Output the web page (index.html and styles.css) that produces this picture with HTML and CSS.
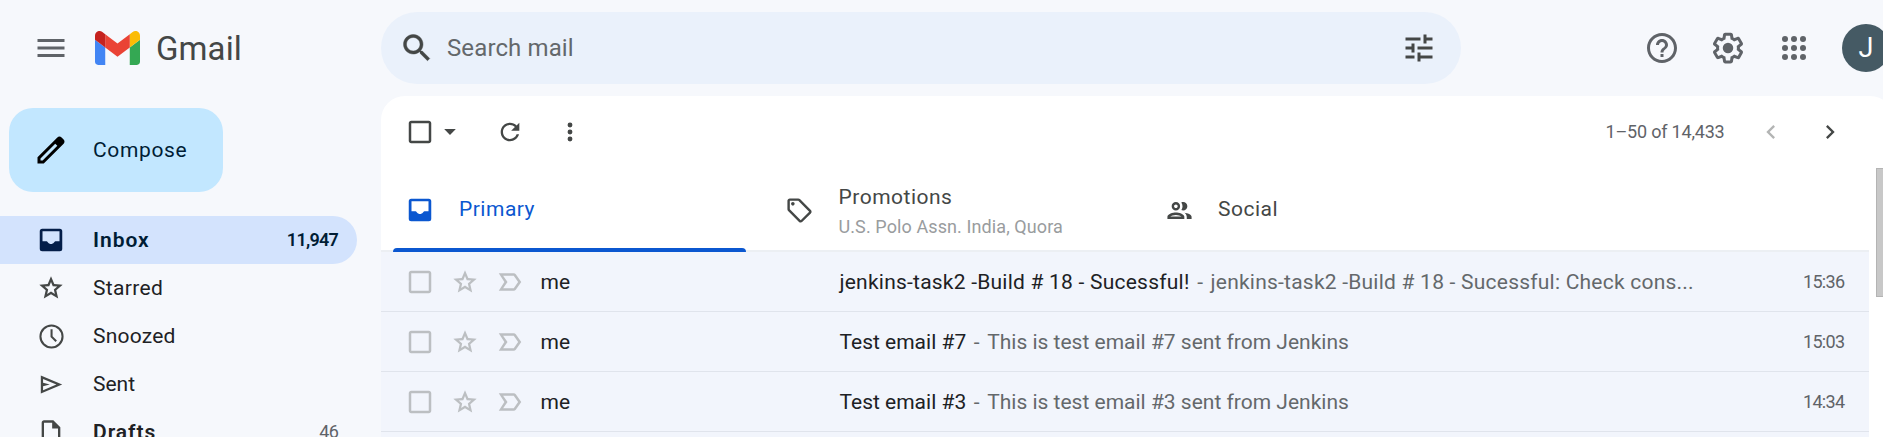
FILE: index.html
```
<!DOCTYPE html>
<html lang="en">
<head>
<meta charset="utf-8">
<title>Gmail</title>
<link rel="stylesheet" href="styles.css">
</head>
<body>
<svg class="defs" width="0" height="0">
  <symbol id="box" viewBox="0 0 24 24"><path d="M19 5v14H5V5h14m0-2H5c-1.100 0-2 .9-2 2v14c0 1.100.9 2 2 2h14c1.100 0 2-.9 2-2V5c0-1.100-.9-2-2-2z"/></symbol>
  <symbol id="star" viewBox="0 0 24 24"><path d="M22 9.240l-7.190-.620L12 2 9.190 8.630 2 9.240l5.460 4.730L5.820 21 12 17.270 18.180 21l-1.630-7.030L22 9.240zM12 15.100l-3.300 2 .88-3.760-2.920-2.530 3.850-.330L12 6.900l1.500 3.580 3.850.330-2.920 2.530.88 3.760L12 15.100z"/></symbol>
  <symbol id="important" viewBox="0 0 24 24"><path d="M15 19H3l4.500-7L3 5h12c.65 0 1.260.31 1.630.84L21 12l-4.370 6.160c-.37.52-.98.84-1.630.84zm-8.500-2H15l3.500-5L15 7H6.500l3.500 5-3.500 5z"/></symbol>
  <symbol id="inbox" viewBox="0 0 24 24"><path fill-rule="evenodd" d="M5 3h14a2 2 0 0 1 2 2v14a2 2 0 0 1-2 2H5a2 2 0 0 1-2-2V5a2 2 0 0 1 2-2zM5.200 5v8h3.300c.9.100 1.300 2.200 3.500 2.200s2.600-2.100 3.500-2.200h3.300V5z"/></symbol>
</svg>

<header class="topbar">
  <div class="brand">
    <svg class="icon i36 grey" viewBox="0 0 24 24"><path d="M3 18h18v-2H3v2zm0-5h18v-2H3v2zm0-7v2h18V6H3z"/></svg>
    <svg class="logo" viewBox="52 42 88 66">
      <path fill="#4285f4" d="M58 108h14V74L52 59v43c0 3.320 2.690 6 6 6"/>
      <path fill="#34a853" d="M120 108h14c3.320 0 6-2.690 6-6V59l-20 15"/>
      <path fill="#fbbc04" d="M120 48v26l20-15v-8c0-7.420-8.470-11.650-14.400-7.200"/>
      <path fill="#ea4335" d="M72 74V48l24 18 24-18v26L96 92"/>
      <path fill="#c5221f" d="M52 51v8l20 15V48l-5.600-4.200c-5.940-4.450-14.400-.22-14.400 7.200"/>
    </svg>
    <span class="brand-name">Gmail</span>
  </div>
  <div class="search">
    <svg class="icon i36 lens" viewBox="0 0 24 24"><path d="M15.500 14h-.79l-.28-.27C15.410 12.590 16 11.110 16 9.500 16 5.910 13.090 3 9.500 3S3 5.910 3 9.500 5.910 16 9.500 16c1.610 0 3.090-.59 4.230-1.570l.27.28v.79l5 4.990L20.490 19l-4.990-5zm-6 0C7.010 14 5 11.990 5 9.500S7.010 5 9.500 5 14 7.010 14 9.500 11.990 14 9.500 14z"/></svg>
    <span class="search-text">Search mail</span>
    <svg class="icon i36" viewBox="0 0 24 24"><path d="M3 17v2h6v-2H3zM3 5v2h10V5H3zm10 16v-2h8v-2h-8v-2h-2v6h2zM7 9v2H3v2h4v2h2V9H7zm14 4v-2H11v2h10zm-6-4h2V7h4V5h-4V3h-2v6z"/></svg>
  </div>
  <div class="tools">
    <svg class="icon i36 grey" viewBox="0 0 24 24"><path d="M11 18h2v-2h-2v2zm1-16C6.480 2 2 6.480 2 12s4.480 10 10 10 10-4.480 10-10S17.520 2 12 2zm0 18c-4.410 0-8-3.590-8-8s3.590-8 8-8 8 3.590 8 8-3.590 8-8 8zm0-14c-2.210 0-4 1.790-4 4h2c0-1.100.9-2 2-2s2 .9 2 2c0 2-3 1.750-3 5h2c0-2.250 3-2.500 3-5 0-2.210-1.790-4-4-4z"/></svg>
    <svg class="icon i36 grey" viewBox="0 0 24 24"><path d="M13.850 22.250h-3.700c-.74 0-1.360-.54-1.450-1.270l-.27-1.890c-.27-.14-.53-.29-.79-.46l-1.800.72c-.7.26-1.470-.03-1.810-.65L2.200 15.530c-.35-.66-.2-1.440.36-1.880l1.530-1.190c-.01-.15-.02-.3-.02-.46 0-.15.01-.31.02-.46l-1.520-1.190c-.59-.45-.74-1.260-.37-1.880l1.850-3.190c.34-.62 1.110-.9 1.790-.63l1.810.73c.26-.17.52-.32.78-.46l.27-1.910c.09-.7.71-1.250 1.440-1.250h3.700c.74 0 1.360.54 1.450 1.270l.27 1.890c.27.14.53.29.79.46l1.800-.72c.71-.26 1.480.03 1.820.65l1.840 3.180c.36.66.2 1.440-.36 1.880l-1.520 1.190c.01.15.02.3.02.46s-.01.31-.02.46l1.520 1.190c.56.45.72 1.230.37 1.860l-1.860 3.220c-.34.62-1.110.9-1.800.63l-1.800-.72c-.26.17-.52.32-.78.46l-.27 1.910c-.1.68-.72 1.220-1.460 1.220zm-3.230-2h2.760l.37-2.550.53-.22c.44-.18.88-.44 1.340-.78l.45-.34 2.380.96 1.380-2.400-2.030-1.580.07-.56c.03-.26.06-.51.06-.78s-.03-.53-.06-.78l-.07-.56 2.030-1.580-1.390-2.400-2.390.96-.45-.35c-.42-.32-.87-.58-1.330-.77l-.52-.22-.37-2.550h-2.760l-.37 2.550-.53.21c-.44.19-.88.44-1.340.79l-.45.33-2.380-.95-1.390 2.390 2.030 1.580-.07.56a7 7 0 0 0-.06.79c0 .26.02.53.06.78l.07.56-2.030 1.580 1.380 2.400 2.390-.96.45.35c.43.33.86.58 1.330.77l.53.22.38 2.550z"/><circle cx="12" cy="12" r="3.500"/></svg>
    <svg class="icon i36 grey" viewBox="0 0 24 24"><circle cx="6" cy="6" r="2"/><circle cx="12" cy="6" r="2"/><circle cx="18" cy="6" r="2"/><circle cx="6" cy="12" r="2"/><circle cx="12" cy="12" r="2"/><circle cx="18" cy="12" r="2"/><circle cx="6" cy="18" r="2"/><circle cx="12" cy="18" r="2"/><circle cx="18" cy="18" r="2"/></svg>
    <span class="avatar">J</span>
  </div>
</header>

<div class="content">
  <nav class="sidebar">
    <div class="compose">
      <svg class="icon i36" viewBox="0 0 24 24"><path d="M20.410 4.940l-1.350-1.350c-.78-.78-2.050-.78-2.830 0L3 16.820V21h4.180L20.410 7.770c.79-.78.79-2.050 0-2.830zM6.410 19.060L5 19v-1.360l9.820-9.820 1.410 1.410-9.820 9.830z"/></svg>
      <span>Compose</span>
    </div>
    <div class="folder active">
      <span class="slot"><svg class="icon i30"><use href="#inbox"/></svg></span>
      <span class="name bold">Inbox</span><span class="count">11,947</span>
    </div>
    <div class="folder">
      <span class="slot"><svg class="icon i28"><use href="#star"/></svg></span>
      <span class="name starred">Starred</span>
    </div>
    <div class="folder">
      <span class="slot"><svg class="icon i29" viewBox="0 0 24 24"><path d="M12 2a10 10 0 1 0 0 20 10 10 0 0 0 0-20zm0 18.300a8.300 8.300 0 1 1 0-16.600 8.300 8.300 0 0 1 0 16.600zM11.200 6h1.700v5.800l3.600 3.500-1.200 1.200-4.100-4z"/></svg></span>
      <span class="name snoozed">Snoozed</span>
    </div>
    <div class="folder">
      <span class="slot"><svg class="icon i27" viewBox="0 0 24 24"><path d="M2.500 4v16l19-8-19-8zm2 3l11.850 5-11.850 5v-3.500l6-1.500-6-1.500V7z"/></svg></span>
      <span class="name">Sent</span>
    </div>
    <div class="folder">
      <span class="slot"><svg class="icon i28" viewBox="0 0 24 24"><path d="M14 2H6c-1.100 0-2 .9-2 2v16c0 1.100.9 2 2 2h12c1.100 0 2-.9 2-2V8l-6-6zM6 20V4h7v5h5v11H6z"/></svg></span>
      <span class="name bold">Drafts</span><span class="count light">46</span>
    </div>
  </nav>

  <main class="panel">
    <div class="toolbar">
      <svg class="icon i30"><use href="#box"/></svg>
      <svg class="icon i28 caret" viewBox="0 0 24 24"><path d="M7 9.500l5 5 5-5z"/></svg>
      <svg class="icon i28 refresh" viewBox="0 0 24 24"><path d="M17.650 6.350C16.200 4.900 14.210 4 12 4c-4.420 0-7.990 3.580-7.990 8s3.570 8 7.990 8c3.730 0 6.840-2.550 7.730-6h-2.080c-.82 2.330-3.040 4-5.650 4-3.310 0-6-2.690-6-6s2.690-6 6-6c1.660 0 3.140.69 4.220 1.780L13 11h7V4l-2.350 2.350z"/></svg>
      <svg class="icon i28 more" viewBox="0 0 24 24"><circle cx="12" cy="6" r="2.100"/><circle cx="12" cy="12" r="2.100"/><circle cx="12" cy="18" r="2.100"/></svg>
      <span class="range">1–50 of 14,433</span>
      <svg class="icon i28 prev" viewBox="0 0 24 24"><path d="M15.410 7.410L14 6l-6 6 6 6 1.410-1.410L10.830 12z"/></svg>
      <svg class="icon i28 next" viewBox="0 0 24 24"><path d="M10 6L8.590 7.410 13.170 12l-4.580 4.590L10 18l6-6z"/></svg>
    </div>
    <div class="tabs">
      <div class="tab selected">
        <span class="tab-slot"><svg class="icon i30"><use href="#inbox"/></svg></span>
        <span class="tab-name">Primary</span>
      </div>
      <div class="tab">
        <span class="tab-slot"><svg class="icon i29" viewBox="0 0 24 24"><path d="M21.410 11.580l-9-9C12.050 2.220 11.550 2 11 2H4c-1.100 0-2 .9-2 2v7c0 .55.22 1.050.59 1.420l9 9c.36.36.86.58 1.410.58s1.050-.22 1.410-.59l7-7c.37-.36.59-.86.59-1.410s-.23-1.060-.59-1.420zM13 20.010L4 11V4h7v-.01l9 9-7 7.020z"/><circle cx="6.500" cy="6.500" r="1.500"/></svg></span>
        <span class="tab-text"><span class="tab-name">Promotions</span><span class="tab-sub">U.S. Polo Assn. India, Quora</span></span>
      </div>
      <div class="tab">
        <span class="tab-slot"><svg class="icon i29" viewBox="0 0 24 24"><path d="M9 13.750c-2.340 0-7 1.170-7 3.500V19h14v-1.750c0-2.330-4.660-3.500-7-3.500zM4.340 17c.84-.58 2.870-1.250 4.660-1.250s3.820.67 4.660 1.250H4.340zM9 12c1.930 0 3.500-1.570 3.500-3.500S10.930 5 9 5 5.500 6.570 5.500 8.500 7.070 12 9 12zm0-5c.83 0 1.500.67 1.500 1.500S9.830 10 9 10s-1.500-.67-1.500-1.500S8.170 7 9 7zm7.040 6.810c1.160.84 1.960 1.960 1.960 3.440V19h4v-1.750c0-2.020-3.500-3.170-5.960-3.440zM15 12c1.930 0 3.500-1.570 3.500-3.500S16.930 5 15 5c-.54 0-1.040.13-1.500.35.63.89 1 1.980 1 3.150s-.37 2.260-1 3.150c.46.22.96.35 1.500.35z"/></svg></span>
        <span class="tab-name">Social</span>
      </div>
    </div>
    <div class="list">
      <div class="mail">
        <svg class="icon i30"><use href="#box"/></svg><svg class="icon i28"><use href="#star"/></svg><svg class="icon i30"><use href="#important"/></svg>
        <span class="sender">me</span>
        <span class="subject wide">jenkins-task2 -Build # 18 - Sucessful!</span><span class="dash">-</span><span class="snippet wide">jenkins-task2 -Build # 18 - Sucessful: Check cons...</span>
        <span class="time">15:36</span>
      </div>
      <div class="mail">
        <svg class="icon i30"><use href="#box"/></svg><svg class="icon i28"><use href="#star"/></svg><svg class="icon i30"><use href="#important"/></svg>
        <span class="sender">me</span>
        <span class="subject">Test email #7</span><span class="dash">-</span><span class="snippet">This is test email #7 sent from Jenkins</span>
        <span class="time">15:03</span>
      </div>
      <div class="mail">
        <svg class="icon i30"><use href="#box"/></svg><svg class="icon i28"><use href="#star"/></svg><svg class="icon i30"><use href="#important"/></svg>
        <span class="sender">me</span>
        <span class="subject">Test email #3</span><span class="dash">-</span><span class="snippet">This is test email #3 sent from Jenkins</span>
        <span class="time">14:34</span>
      </div>
      <div class="mail"></div>
    </div>
  </main>
</div>
<div class="scroll-thumb"></div>
</body>
</html>
```
FILE: styles.css
```
* { box-sizing: border-box; }
html, body { height: 100%; }
body {
  margin: 0;
  overflow: hidden;
  position: relative;
  background: #f6f8fc;
  color: #202124;
  font: 400 21px/30px Roboto, "Liberation Sans", sans-serif;
  white-space: nowrap;
}
.defs { position: absolute; }
.icon { display: block; flex: none; fill: #444746; }
.i27 { width: 27px; height: 27px; }
.i28 { width: 28px; height: 28px; }
.i29 { width: 29px; height: 29px; }
.i30 { width: 30px; height: 30px; }
.i36 { width: 36px; height: 36px; }
.grey { fill: #5f6368; }

/* Top bar */
.topbar { display: flex; align-items: center; height: 96px; width: 1894px; }
.brand { display: flex; align-items: center; width: 381px; flex: none; padding-left: 33px; }
.logo { width: 45px; height: 34px; margin-left: 26px; }
.brand-name { margin: 2px 0 0 16px; font-size: 33px; letter-spacing: .1px; color: #444746; }
.search {
  display: flex; align-items: center; flex: none;
  width: 1080px; height: 72px; padding: 0 24px 0 18px;
  border-radius: 36px; background: #eaf1fb;
}
.lens { stroke: #444746; stroke-width: .3; }
.search-text { flex: 1; margin-left: 12px; font-size: 24px; letter-spacing: .12px; color: #64686b; }
.tools { display: flex; align-items: center; gap: 30px; margin-left: 183px; }
.avatar {
  width: 48px; height: 48px; border-radius: 50%; background: #455a64; color: #fff;
  font-size: 27px; line-height: 48px; text-align: center; flex: none;
}

/* Sidebar */
.content { display: flex; width: 1894px; height: 341px; overflow: hidden; }
.sidebar { width: 381px; flex: none; padding-top: 12px; }
.compose {
  display: flex; align-items: center; gap: 24px;
  width: 214px; height: 84px; margin: 0 0 24px 9px; padding-left: 24px;
  border-radius: 24px; background: #c2e7ff; color: #001d35;
  font-weight: 450; letter-spacing: .65px;
}
.compose .icon { fill: #000; }
.folder { display: flex; align-items: center; width: 357px; height: 48px; padding: 0 19px 0 33px; }
.folder.active { background: #d3e3fd; border-radius: 0 24px 24px 0; color: #001d35; }
.folder.active .icon { fill: #041e49; }
.slot { display: flex; justify-content: center; width: 36px; }
.name { flex: 1; margin-left: 24px; }
.bold { font-weight: 650; letter-spacing: .95px; }
.starred { letter-spacing: .34px; }
.snoozed { letter-spacing: .21px; }
.count { font-size: 18px; font-weight: 650; letter-spacing: -.75px; }
.count.light { font-weight: 400; color: #5f6368; }

/* Mail panel */
.panel { flex: 1; background: #fff; border-radius: 24px 24px 0 0; overflow: hidden; }
.toolbar { display: flex; align-items: center; height: 72px; width: 1488px; padding: 0 25.5px 0 24px; }
.caret { margin-left: 1px; }
.refresh { margin-left: 32px; }
.more { margin-left: 32px; }
.range { margin-left: auto; font-size: 18px; letter-spacing: -.2px; color: #5f6368; }
.prev { margin-left: 32px; opacity: .4; }
.next { margin-left: 31px; }
.tabs { display: flex; width: 1488px; height: 84px; padding-left: 12px; border-bottom: 2px solid #eceff3; }
.tab { display: flex; align-items: center; position: relative; width: 379.5px; height: 84px; }
.tab-slot { display: flex; justify-content: center; width: 54px; }
.tab-name { display: block; font-weight: 450; letter-spacing: .5px; color: #444746; margin: 0 0 2px 12px; }
.tab-text { margin: 3px 0 0 12px; }
.tab-text .tab-name { margin: 0; }
.tab-sub { display: block; font-size: 18px; letter-spacing: .1px; color: #999c9e; }
.selected .tab-name { color: #0b57d0; }
.selected .icon { fill: #0b57d0; }
.selected::after {
  content: ""; position: absolute; left: 0; bottom: 0;
  width: 353px; height: 4px; border-radius: 4px 4px 0 0; background: #0b57d0;
}
.mail {
  display: flex; align-items: center; width: 1488px; height: 60px; padding: 0 24.5px 0 24px;
  background: #f2f5fc; border-bottom: 1px solid #e0e4ec;
}
.mail .icon { fill: #bcbfc2; }
.mail .icon:nth-of-type(2) { margin: 1px 16px 0; }
.sender { width: 299px; margin-left: 15.5px; }
.wide { letter-spacing: .225px; }
.dash { width: 21px; text-align: center; color: #64686b; }
.snippet { color: #64686b; }
.time { margin-left: auto; font-size: 18px; letter-spacing: -.65px; color: #5f6368; }

.scroll-thumb {
  position: absolute; left: 1876px; top: 168px; width: 12px; height: 129px;
  background: #c8c8c8; border: 1px solid #b4b4b4;
}
```
